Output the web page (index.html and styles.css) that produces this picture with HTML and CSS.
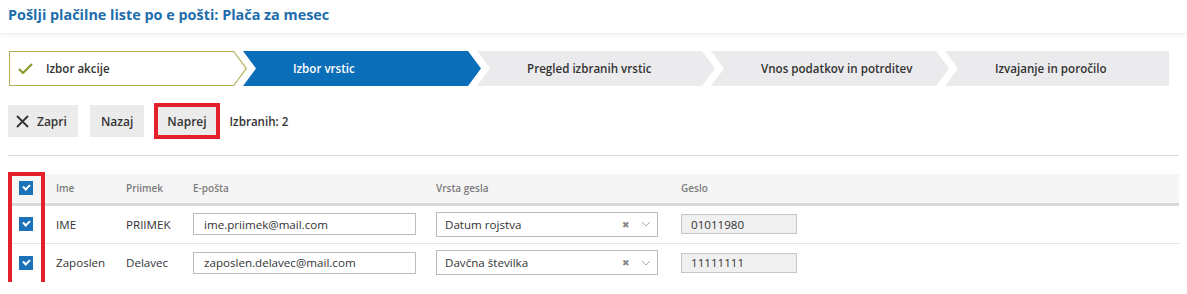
FILE: index.html
```html
<!doctype html>
<html>
  <head>
    <meta charset="utf-8" />
    <title>Pošlji plačilne liste po e pošti</title>
    <link rel="stylesheet" href="styles.css">
  </head>
  <body>
    <div class="page-header">
      <h1>Pošlji plačilne liste po e pošti: Plača za mesec</h1>
    </div>

    <div class="wizard">
      <div class="step step-done">
        <svg class="step-check" width="15" height="11" viewBox="0 0 15 11">
          <path d="M1 6 L5 10 L14 1" fill="none" stroke="#8d9a2c" stroke-width="2.2" />
        </svg>
        <span>Izbor akcije</span>
      </div>
      <div class="step step-active"><span>Izbor vrstic</span></div>
      <div class="step"><span>Pregled izbranih vrstic</span></div>
      <div class="step"><span>Vnos podatkov in potrditev</span></div>
      <div class="step step-last"><span>Izvajanje in poročilo</span></div>
    </div>

    <div class="toolbar">
      <button class="btn btn-close">
        <svg width="13" height="13" viewBox="0 0 13 13">
          <path d="M1 1 L12 12 M12 1 L1 12" stroke="#333" stroke-width="1.8" />
        </svg>
        Zapri
      </button>
      <button class="btn">Nazaj</button>
      <button class="btn btn-marked">Naprej</button>
      <span class="selected-count">Izbranih: 2</span>
    </div>

    <div class="divider"></div>

    <div class="grid-wrap">
      <table class="grid">
        <thead>
          <tr>
            <th class="col-check"><span class="checkbox"></span></th>
            <th class="col-name">Ime</th>
            <th class="col-surname">Priimek</th>
            <th class="col-email">E-pošta</th>
            <th class="col-type">Vrsta gesla</th>
            <th>Geslo</th>
          </tr>
        </thead>
        <tbody>
          <tr>
            <td class="col-check"><span class="checkbox"></span></td>
            <td>IME</td>
            <td>PRIIMEK</td>
            <td><input class="text-input" type="text" value="ime.priimek@mail.com" /></td>
            <td>
              <div class="select">
                <span class="select-value">Datum rojstva</span>
                <span class="select-clear">✖</span>
                <svg class="select-arrow" width="10" height="6" viewBox="0 0 10 6">
                  <path d="M1 1 L5 5 L9 1" fill="none" stroke="#aaa" stroke-width="1" />
                </svg>
              </div>
            </td>
            <td><input class="pass-input" type="text" value="01011980" readonly /></td>
          </tr>
          <tr>
            <td class="col-check"><span class="checkbox"></span></td>
            <td>Zaposlen</td>
            <td>Delavec</td>
            <td><input class="text-input" type="text" value="zaposlen.delavec@mail.com" /></td>
            <td>
              <div class="select">
                <span class="select-value">Davčna številka</span>
                <span class="select-clear">✖</span>
                <svg class="select-arrow" width="10" height="6" viewBox="0 0 10 6">
                  <path d="M1 1 L5 5 L9 1" fill="none" stroke="#aaa" stroke-width="1" />
                </svg>
              </div>
            </td>
            <td><input class="pass-input" type="text" value="11111111" readonly /></td>
          </tr>
        </tbody>
      </table>
      <div class="highlight"></div>
    </div>
  </body>
</html>
```

FILE: styles.css
```css
* {
  box-sizing: border-box;
}
body {
  margin: 0;
  background-color: #ffffff;
  font-family: "Open Sans", "Noto Sans", sans-serif;
  font-size: 11.6px;
  color: #333;
}
.page-header {
  height: 33px;
  padding: 5px 8px;
  box-shadow: 0 2px 4px rgba(0, 0, 0, 0.07);
}
h1 {
  margin: 0;
  font-size: 14.4px;
  line-height: 20px;
  font-weight: 700;
  color: #1d6dac;
}

/* wizard */
.wizard {
  display: flex;
  height: 35px;
  margin: 18px 18px 0 9px;
}
.step {
  position: relative;
  flex: 0 0 238px;
  display: flex;
  align-items: center;
  padding-left: 50px;
  margin-left: -4px;
  background: #ebebed;
  font-weight: 600;
  color: #333;
  clip-path: polygon(0 0, calc(100% - 13px) 0, 100% 50%, calc(100% - 13px) 100%, 0 100%, 13px 50%);
}
.step-done {
  margin-left: 0;
  padding-left: 9px;
  background: #b2ae52;
  clip-path: polygon(0 0, calc(100% - 13px) 0, 100% 50%, calc(100% - 13px) 100%, 0 100%);
}
.step-done::before {
  content: "";
  position: absolute;
  inset: 0;
  z-index: -1;
  background: #fff;
  clip-path: polygon(1px 1px, calc(100% - 13.5px) 1px, calc(100% - 1.5px) 50%, calc(100% - 13.5px) calc(100% - 1px), 1px calc(100% - 1px));
}
.step-done span {
  position: relative;
}
.step-check {
  position: relative;
  margin-right: 13px;
}
.step-active {
  background: #0b6eb9;
  color: #fff;
}
.step-last {
  flex: 1;
  clip-path: polygon(0 0, 100% 0, 100% 100%, 0 100%, 13px 50%);
}

/* toolbar */
.toolbar {
  display: flex;
  align-items: center;
  gap: 12px;
  margin-top: 19px;
  padding-left: 8px;
}
.btn {
  display: flex;
  align-items: center;
  height: 32px;
  padding: 0 11px;
  border: 0;
  background: #ebebeb;
  font-family: inherit;
  font-size: 12px;
  font-weight: 600;
  color: #333;
}
.btn-close {
  padding-left: 8px;
  gap: 8px;
}
.btn-marked {
  outline: 4px solid #e3202b;
  outline-offset: -2px;
}
.selected-count {
  margin-left: 0;
  font-weight: 600;
}
.divider {
  margin: 18px 8px 0;
  border-top: 1px solid #dcdcdc;
}

/* grid */
.grid-wrap {
  position: relative;
  margin: 18px 8px 0;
}
.grid {
  width: 100%;
  border-collapse: collapse;
}
.grid th {
  height: 30px;
  padding: 0 0 0 9px;
  background: #f5f5f6;
  border-bottom: 3px solid #dadada;
  text-align: left;
  font-size: 10px;
  font-weight: 600;
  color: #7b7b7b;
}
.grid td {
  height: 39px;
  padding: 0 0 0 9px;
  border-bottom: 1px solid #e6e6e6;
}
.grid tbody tr:last-child td {
  border-bottom: 0;
}
.grid .col-check {
  width: 39px;
  padding-left: 11px;
}
.col-name {
  width: 70px;
}
.col-surname {
  width: 67px;
}
.col-email {
  width: 243px;
}
.col-type {
  width: 245px;
}
.checkbox {
  display: block;
  width: 14px;
  height: 14px;
  background: #1b72b9;
  position: relative;
}
.checkbox::after {
  content: "";
  position: absolute;
  left: 4px;
  top: 3px;
  width: 5px;
  height: 3px;
  border-left: 2px solid #fff;
  border-bottom: 2px solid #fff;
  transform: rotate(-45deg);
}
.text-input {
  display: block;
  width: 223px;
  height: 22px;
  padding: 0 10px;
  border: 1px solid #bcbcbc;
  font-family: inherit;
  font-size: 11.6px;
  color: #333;
}
.select {
  display: flex;
  align-items: center;
  width: 222px;
  height: 25px;
  padding: 0 6px 0 8px;
  border: 1px solid #bcbcbc;
}
.select-value {
  flex: 1;
}
.select-clear {
  font-size: 9px;
  color: #888;
  margin-right: 11px;
}
.pass-input {
  display: block;
  width: 116px;
  height: 20px;
  padding: 0 9px;
  border: 1px solid #c6c6c6;
  background: #f0f0f0;
  font-family: inherit;
  font-size: 11.6px;
  color: #333;
}
.highlight {
  position: absolute;
  left: 0;
  top: -2px;
  width: 37px;
  height: 117px;
  border: 4px solid #e3202b;
}
```
